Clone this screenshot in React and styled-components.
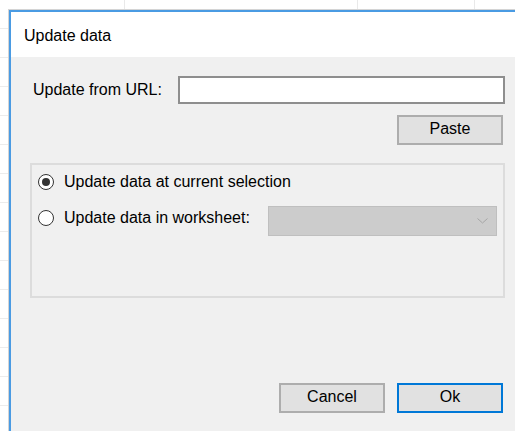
import React from 'react'
import styled, { createGlobalStyle } from 'styled-components'

const GlobalStyle = createGlobalStyle`
  html, body {
    margin: 0;
    padding: 0;
    height: 100%;
    overflow: hidden;
  }
  body {
    background-color: #ffffff;
    background-image:
      linear-gradient(to right, transparent 124px, #e9e9e9 124px, #e9e9e9 125px, transparent 125px),
      linear-gradient(to right, transparent 357px, #e9e9e9 357px, #e9e9e9 358px, transparent 358px),
      linear-gradient(to right, transparent 474px, #e9e9e9 474px, #e9e9e9 475px, transparent 475px),
      repeating-linear-gradient(to bottom, transparent 0 28px, #ececec 28px 29px);
    background-size: 100% 100%, 100% 100%, 100% 100%, 100% 100%;
    font-family: "Segoe UI", "Liberation Sans", Arial, sans-serif;
    color: #000;
  }
`

const Desktop = styled.div`
  padding: 10px 0 0 9px;
`

const Window = styled.div`
  width: 524px;
  height: 440px;
  background: #f0f0f0;
  border: 2px solid #4a9be3;
  border-right: none;
  border-bottom: none;
  box-shadow: -1px -1px 0 #d4d4d4;
  display: flex;
  flex-direction: column;
`

const TitleBar = styled.div`
  height: 45px;
  flex: none;
  background: #ffffff;
  display: flex;
  align-items: center;
  padding: 3px 0 0 13px;
  font-size: 16px;
  box-sizing: border-box;
`

const Body = styled.div`
  flex: 1;
  padding: 19px 30px 0 19px;
  display: flex;
  flex-direction: column;
`

const UrlRow = styled.div`
  display: flex;
  align-items: center;
  height: 28px;
`

const Label = styled.label`
  font-size: 16px;
  width: 145px;
  padding-left: 3px;
  flex: none;
`

const TextInput = styled.input`
  flex: 1;
  height: 28px;
  box-sizing: border-box;
  border: 2px solid #8e8e8e;
  background: #fff;
  outline: none;
  margin: 0;
  font: inherit;
`

const ButtonRow = styled.div`
  display: flex;
  justify-content: flex-end;
  gap: 12px;
  padding-right: 2px;
  margin-top: ${p => p.$top}px;
`

const Button = styled.button`
  width: 106px;
  height: 30px;
  box-sizing: border-box;
  background: #e1e1e1;
  border: ${p => (p.$default ? '2px solid #0078d7' : '2px solid #adadad')};
  font-family: inherit;
  font-size: 16px;
  color: #000;
  padding: 0 0 2px;
  margin: 0;
`

const GroupBox = styled.div`
  margin-top: 18px;
  height: 135px;
  box-sizing: border-box;
  border: 2px solid #dcdcdc;
  padding: 6px 5px 0 6px;
  display: flex;
  flex-direction: column;
  gap: 13px;
`

const OptionRow = styled.div`
  display: grid;
  grid-template-columns: 230px 229px;
  align-items: start;
  min-height: 22px;

  & > :only-child {
    grid-column: 1 / -1;
  }
`

const RadioLabel = styled.label`
  display: flex;
  align-items: center;
  gap: 10px;
  height: 22px;
  margin-top: ${p => p.$offset || 0}px;
  font-size: 16px;
  white-space: nowrap;
`

const RadioCircle = styled.span`
  width: 16px;
  height: 16px;
  box-sizing: border-box;
  border-radius: 50%;
  border: 1.4px solid #333;
  background: #fff;
  display: flex;
  align-items: center;
  justify-content: center;
  flex: none;

  &::after {
    content: '';
    width: 8px;
    height: 8px;
    border-radius: 50%;
    background: ${p => (p.$checked ? '#333' : 'transparent')};
  }
`

const Combo = styled.div`
  height: 30px;
  box-sizing: border-box;
  background: #cccccc;
  border: 1px solid #bfbfbf;
  display: flex;
  align-items: center;
  justify-content: flex-end;
  padding-right: 8px;
`

const Chevron = () => (
  <svg width="11" height="6" viewBox="0 0 11 6">
    <path d="M0.5 0.5 L5.5 5 L10.5 0.5" fill="none" stroke="#a6a6a6" strokeWidth="1" />
  </svg>
)

const Radio = ({ checked, children, offset }) => (
  <RadioLabel $offset={offset}>
    <RadioCircle $checked={checked} />
    {children}
  </RadioLabel>
)

const App = () => (
  <>
    <GlobalStyle />
    <Desktop>
      <Window>
        <TitleBar>Update data</TitleBar>
        <Body>
          <UrlRow>
            <Label>Update from URL:</Label>
            <TextInput type="text" />
          </UrlRow>
          <ButtonRow $top={11}>
            <Button>Paste</Button>
          </ButtonRow>
          <GroupBox>
            <OptionRow>
              <Radio checked>Update data at current selection</Radio>
            </OptionRow>
            <OptionRow>
              <Radio offset={1}>Update data in worksheet:</Radio>
              <Combo>
                <Chevron />
              </Combo>
            </OptionRow>
          </GroupBox>
          <ButtonRow $top={85}>
            <Button>Cancel</Button>
            <Button $default>Ok</Button>
          </ButtonRow>
        </Body>
      </Window>
    </Desktop>
  </>
)

export default App
